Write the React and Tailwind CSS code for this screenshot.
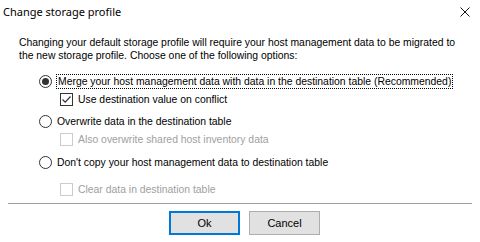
import React, { useState } from 'react'

const SANS = { fontFamily: '"Liberation Sans", Arial, sans-serif' }

function Radio({ checked, onChange }) {
  return (
    <span
      onClick={onChange}
      className="w-[13px] h-[13px] rounded-full border border-[#333333] bg-white flex items-center justify-center shrink-0"
    >
      {checked && <span className="w-[7px] h-[7px] rounded-full bg-[#333333]" />}
    </span>
  )
}

function Check({ checked, disabled }) {
  return (
    <span
      className={
        'w-[13px] h-[13px] border bg-white flex items-center justify-center shrink-0 ' +
        (disabled ? 'border-[#cccccc]' : 'border-[#333333]')
      }
    >
      {checked && (
        <svg width="11" height="11" viewBox="0 0 11 11">
          <path d="M1.5 5.5 L4.2 8.2 L9.5 2.5" fill="none" stroke="#333333" strokeWidth="1.2" />
        </svg>
      )}
    </span>
  )
}

export default function App() {
  const [choice, setChoice] = useState(0)

  return (
    <div className="w-[480px] h-[242px] bg-white text-black overflow-hidden select-none" style={SANS}>
      {/* title bar */}
      <div className="h-[24px] flex items-center justify-between pl-[3px] pr-[10px]">
        <span className="text-[11px] text-black" style={{ fontFamily: '"Noto Sans", "Open Sans", sans-serif' }}>
          Change storage profile
        </span>
        <svg width="10" height="10" viewBox="0 0 10 10">
          <path d="M0.5 0.5 L9.5 9.5 M9.5 0.5 L0.5 9.5" stroke="#111" strokeWidth="1" />
        </svg>
      </div>

      <div className="pl-[19px] pr-[8px] pt-[12px] text-[10.4px] leading-[13px] whitespace-nowrap">
        <p>
          Changing your default storage profile will require your host management data to be migrated to
          <br />
          the new storage profile. Choose one of the following options:
        </p>

        <div className="pl-[20px]">
          <div className="mt-[12px] h-[15px] flex items-center gap-[4px]">
            <Radio checked={choice === 0} onChange={() => setChoice(0)} />
            <span className="border border-dotted border-black px-[1px] leading-[13px]">
              Merge your host management data with data in the destination table (Recommended)
            </span>
          </div>
          <div className="mt-[3px] h-[15px] flex items-center gap-[5px] pl-[21px]">
            <Check checked />
            <span>Use destination value on conflict</span>
          </div>

          <div className="mt-[7px] h-[15px] flex items-center gap-[5px]">
            <Radio checked={choice === 1} onChange={() => setChoice(1)} />
            <span>Overwrite data in the destination table</span>
          </div>
          <div className="mt-[3px] h-[15px] flex items-center gap-[5px] pl-[21px] text-[#a0a0a0]">
            <Check disabled />
            <span>Also overwrite shared host inventory data</span>
          </div>

          <div className="mt-[8px] h-[15px] flex items-center gap-[5px]">
            <Radio checked={choice === 2} onChange={() => setChoice(2)} />
            <span>Don't copy your host management data to destination table</span>
          </div>
          <div className="mt-[12px] h-[15px] flex items-center gap-[5px] pl-[21px] text-[#a0a0a0]">
            <Check disabled />
            <span>Clear data in destination table</span>
          </div>
        </div>
      </div>

      <div className="mt-[6px] mx-[8px] h-px bg-[#a0a0a0]" />

      <div className="mt-[7px] flex justify-center gap-[9px] pl-[9px] text-[11px]">
        <button className="w-[71px] h-[24px] bg-[#e1e1e1] border-2 border-[#0078d7] flex items-center justify-center">
          Ok
        </button>
        <button className="w-[71px] h-[24px] bg-[#e1e1e1] border border-[#adadad] flex items-center justify-center">
          Cancel
        </button>
      </div>
    </div>
  )
}
